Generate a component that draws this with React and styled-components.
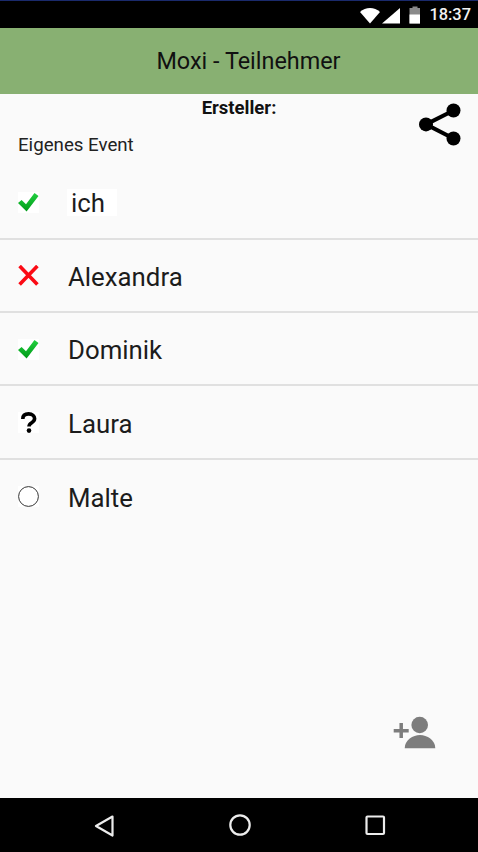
import React from "react";
import styled, { createGlobalStyle } from "styled-components";

const Global = createGlobalStyle`
  html, body { margin: 0; padding: 0; background: #fafafa; }
  body { font-family: Roboto, "Liberation Sans", sans-serif; }
`;

const Screen = styled.div`
  width: 478px;
  height: 852px;
  display: flex;
  flex-direction: column;
  background: #fafafa;
  overflow: hidden;
`;

const StatusBar = styled.div`
  height: 27px;
  flex: none;
  background: #000;
  border-top: 1px solid #1a2a6c;
  display: flex;
  align-items: center;
  justify-content: flex-end;
  padding-right: 7px;
  color: #fff;
  font-size: 16.4px;
  font-weight: 500;
`;

const StatusIcons = styled.div`
  display: flex;
  align-items: center;
  margin-right: 8px;
  svg { display: block; }
`;

const Clock = styled.span`
  color: #f2f2f2;
  line-height: 27px;
`;

const Header = styled.header`
  height: 66px;
  flex: none;
  box-sizing: border-box;
  background: #88b072;
  display: flex;
  align-items: center;
  justify-content: center;
  padding-left: 19px;
  font-size: 23.4px;
  color: #111;
`;

const Content = styled.main`
  flex: 1;
  position: relative;
  min-height: 0;
`;

const Intro = styled.div`
  height: 72.5px;
  display: flex;
  flex-direction: column;
`;

const Creator = styled.div`
  font-size: 18.5px;
  font-weight: 700;
  color: #111;
  text-align: center;
  line-height: 20px;
  margin-top: 3.5px;
`;

const EventName = styled.div`
  font-size: 18.7px;
  color: #222;
  line-height: 20px;
  margin-top: 17px;
  padding-left: 18px;
`;

const ShareButton = styled.div`
  position: absolute;
  top: 9px;
  right: 17px;
  width: 43px;
  height: 43px;
  svg { display: block; }
`;

const List = styled.div`
  display: flex;
  flex-direction: column;
`;

const Row = styled.div`
  height: 73.33px;
  box-sizing: border-box;
  display: flex;
  align-items: center;
  padding-left: 18px;
  padding-top: 1px;
  border-bottom: ${(p) => (p.$last ? "none" : "2px solid #e0e0e0")};
`;

const StatusIcon = styled.div`
  width: 21px;
  height: 21px;
  background: ${(p) => (p.$plain ? "transparent" : "#fff")};
  flex: none;
  margin-right: 29px;
  svg { display: block; }
`;

const Name = styled.div`
  font-size: 25.8px;
  color: #1c1c1c;
  line-height: 30px;
  padding: ${(p) => (p.$self ? "0 12px 0 4px" : "2px 0 0")};
  margin-left: ${(p) => (p.$self ? "-1px" : "0")};
  background: ${(p) => (p.$self ? "#fff" : "transparent")};
  height: 27px;
  display: flex;
  align-items: center;
`;

const AddButton = styled.div`
  position: absolute;
  right: 42px;
  bottom: 48px;
  width: 44px;
  height: 34px;
  svg { display: block; }
`;

const NavBar = styled.nav`
  height: 54px;
  flex: none;
  background: #000;
  display: grid;
  align-items: center;
  justify-items: center;
  padding: 0 91px 0 92px;
  box-sizing: border-box;
  grid-template-columns: 24px 1fr 24px;
  svg { display: block; }
`;

const Check = ({ id }) => (
  <svg width="21" height="21" viewBox="0 0 21 21">
    <defs>
      <linearGradient id={id} x1="0" y1="0" x2="0" y2="1">
        <stop offset="0" stopColor="#22d040" />
        <stop offset="1" stopColor="#009a18" />
      </linearGradient>
    </defs>
    <path d="M0 11 L3.6 8 L8 12.2 L16.5 1 L20.5 4 L8.6 19.6 Z" fill={`url(#${id})`} />
  </svg>
);

const Cross = () => (
  <svg width="21" height="21" viewBox="0 0 21 21">
    <path d="M1.6 1 L19.4 19.6 M19.4 1 L1.6 19.6" stroke="#fb0a14" strokeWidth="3.6" fill="none" />
  </svg>
);

const Question = () => (
  <svg width="21" height="21" viewBox="0 0 21 21">
    <path d="M4.8 7 C4.8 3.5 7 1.9 10.6 1.9 C14.4 1.9 16.6 4 16.6 6.6 C16.6 9 15 10 13.4 11 C11.8 12 11 12.8 11 14.6" stroke="#000" strokeWidth="3.6" fill="none" />
    <circle cx="11" cy="18.6" r="2.3" fill="#000" />
  </svg>
);

const Circle = () => (
  <svg width="21" height="21" viewBox="0 0 21 21">
    <circle cx="10.5" cy="10.5" r="9.9" fill="#fff" stroke="#333" strokeWidth="1" />
  </svg>
);

const people = [
  { name: "ich", icon: <Check id="check-a" />, self: true },
  { name: "Alexandra", icon: <Cross />, plain: true },
  { name: "Dominik", icon: <Check id="check-b" /> },
  { name: "Laura", icon: <Question /> },
  { name: "Malte", icon: <Circle />, last: true },
];

export default function App() {
  return (
    <Screen>
      <Global />
      <StatusBar>
        <StatusIcons>
          <svg width="61" height="18" viewBox="0 0 61 18">
            <path d="M0 6 C5.5 0.6 14.5 0.6 20 6 L10 17.5 Z" fill="#fff" />
            <path d="M22 17.5 L40 2 L40 17.5 Z" fill="#fff" />
            <path d="M52.5 2 V0.5 H57.5 V2 H60 V17.5 H49.5 V2 Z" fill="#8a8a8a" />
            <rect x="49.5" y="8.5" width="10.5" height="9" fill="#fff" />
          </svg>
        </StatusIcons>
        <Clock>18:37</Clock>
      </StatusBar>
      <Header>Moxi - Teilnehmer</Header>
      <Content>
        <Intro>
          <Creator>Ersteller:</Creator>
          <EventName>Eigenes Event</EventName>
        </Intro>
        <ShareButton>
          <svg width="43" height="43" viewBox="0 0 43 43">
            <path d="M8 21.4 L35.5 7.5 M8 21.4 L35.5 35.5" stroke="#000" strokeWidth="4" fill="none" />
            <circle cx="8" cy="21.4" r="7" fill="#000" />
            <circle cx="35.5" cy="7.5" r="7" fill="#000" />
            <circle cx="35.5" cy="35.5" r="7" fill="#000" />
          </svg>
        </ShareButton>
        <List>
          {people.map((p) => (
            <Row key={p.name} $last={p.last}>
              <StatusIcon $plain={p.plain}>{p.icon}</StatusIcon>
              <Name $self={p.self}>{p.name}</Name>
            </Row>
          ))}
        </List>
        <AddButton>
          <svg width="44" height="34" viewBox="0 0 44 34">
            <circle cx="27.7" cy="9" r="8.3" fill="#7d7d7d" />
            <path d="M12.7 32.3 C12.7 24 21 19 28 19 C35 19 43.3 24 43.3 32.3 Z" fill="#7d7d7d" />
            <path d="M1.7 14.7 H16.7 M9.2 7 V22" stroke="#7d7d7d" strokeWidth="3.5" fill="none" />
          </svg>
        </AddButton>
      </Content>
      <NavBar>
        <svg width="24" height="24" viewBox="0 0 24 24">
          <path d="M20.5 3.5 L4 13 L20.5 22.5 Z" fill="none" stroke="#ececec" strokeWidth="2.2" strokeLinejoin="round" />
        </svg>
        <svg width="24" height="24" viewBox="0 0 24 24">
          <circle cx="12" cy="12" r="9.7" fill="none" stroke="#ececec" strokeWidth="2.2" />
        </svg>
        <svg width="24" height="24" viewBox="0 0 24 24">
          <rect x="3.5" y="3.5" width="17.5" height="17.5" rx="1" fill="none" stroke="#ececec" strokeWidth="2.2" />
        </svg>
      </NavBar>
    </Screen>
  );
}
